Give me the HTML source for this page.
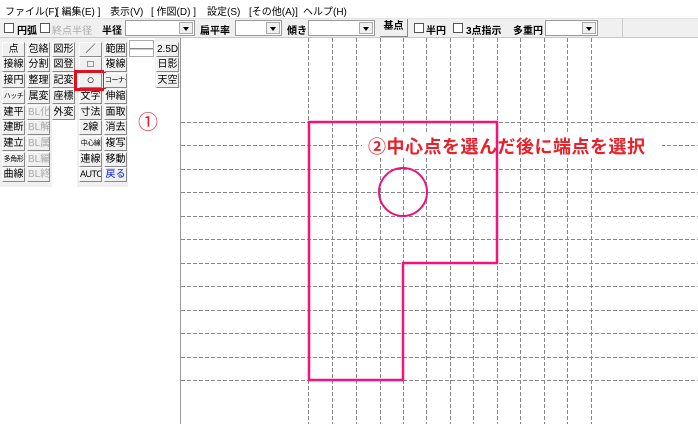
<!DOCTYPE html>
<html><head><meta charset="utf-8"><style>
*{margin:0;padding:0;box-sizing:border-box}
body{width:698px;height:424px;overflow:hidden;background:#fff;position:relative;font-family:"Liberation Sans","Noto Sans CJK JP",sans-serif;font-size:10px;color:#000}
.a{position:absolute;white-space:nowrap}
.menu{top:0;left:0;width:698px;height:18px;background:#fff}
.tb{top:18px;left:0;width:698px;height:20px;background:#f0f0f0;border-top:1px solid #e3e3e3;border-bottom:1px solid #c8c8c8}
.cb{width:10px;height:10px;border:1px solid #555;background:#fff;top:23px}
.combo{top:20px;height:16px;background:#fff;border:1px solid #999}
.combo i{position:absolute;right:1px;top:1px;width:14px;height:12px;border:1px solid #aaa;background:#f0f0f0}
.combo i:after{content:"";position:absolute;left:3px;top:4px;border-left:3px solid transparent;border-right:3px solid transparent;border-top:4px solid #000}
.pan{background:#f0f0f0}
.b{width:23px;height:15px;background:#f0f0f0;border-top:1px solid #fff;border-left:1px solid #fff;border-right:1px solid #888;border-bottom:1px solid #888;font-size:10px;line-height:13px;text-align:center;overflow:hidden}
.s{font-size:7px;letter-spacing:-0.5px}
.g{color:#aaa}
</style></head><body>
<div class="a menu"></div>
<div class="a" style="top:3px;left:5px">ファイル(F)</div>
<div class="a" style="top:3px;left:56px">[ 編集(E) ]</div>
<div class="a" style="top:3px;left:110px">表示(V)</div>
<div class="a" style="top:3px;left:151px">[ 作図(D) ]</div>
<div class="a" style="top:3px;left:207px">設定(S)</div>
<div class="a" style="top:3px;left:249px">[その他(A)]</div>
<div class="a" style="top:3px;left:303px">ヘルプ(H)</div>

<div class="a tb"></div>
<div class="a cb" style="left:4px"></div><div class="a" style="top:22px;left:17px;font-weight:bold">円弧</div>
<div class="a cb" style="left:40px"></div><div class="a g" style="top:22px;left:52px">終点半径</div>
<div class="a" style="top:22px;left:102px;font-weight:bold">半径</div>
<div class="a combo" style="left:125px;width:70px"><i></i></div>
<div class="a" style="top:22px;left:200px;font-weight:bold">扁平率</div>
<div class="a combo" style="left:235px;width:47px"><i></i></div>
<div class="a" style="top:22px;left:287px;font-weight:bold">傾き</div>
<div class="a combo" style="left:308px;width:67px"><i></i></div>
<div class="a" style="top:19px;left:380px;width:28px;height:18px;border-right:1px solid #888;border-bottom:1px solid #888;line-height:16px;text-align:center;font-weight:bold">基点</div>
<div class="a cb" style="left:414px"></div><div class="a" style="top:22px;left:426px;font-weight:bold">半円</div>
<div class="a cb" style="left:453px"></div><div class="a" style="top:22px;left:466px;font-weight:bold">3点指示</div>
<div class="a" style="top:22px;left:513px;font-weight:bold">多重円</div>
<div class="a combo" style="left:545px;width:53px"><i></i></div>
<div class="a" style="top:18px;left:622px;width:1px;height:20px;background:#ccc"></div>

<svg class="a" style="left:0;top:38px" width="698" height="386">
<line x1="180.5" y1="0" x2="180.5" y2="386" stroke="#999" stroke-width="1"/>
<g stroke="#888" stroke-width="1" stroke-dasharray="4,2">
<line x1="308.5" y1="0" x2="308.5" y2="386"/><line x1="332.5" y1="0" x2="332.5" y2="386"/><line x1="356.5" y1="0" x2="356.5" y2="386"/><line x1="380.5" y1="0" x2="380.5" y2="386"/><line x1="403.5" y1="0" x2="403.5" y2="386"/><line x1="426.5" y1="0" x2="426.5" y2="386"/><line x1="450.5" y1="0" x2="450.5" y2="386"/><line x1="473.5" y1="0" x2="473.5" y2="386"/><line x1="497.5" y1="0" x2="497.5" y2="386"/><line x1="520.5" y1="0" x2="520.5" y2="386"/><line x1="544.5" y1="0" x2="544.5" y2="386"/><line x1="567.5" y1="0" x2="567.5" y2="386"/><line x1="591.5" y1="0" x2="591.5" y2="386"/>
<line x1="181" y1="84.5" x2="698" y2="84.5"/><line x1="181" y1="107.5" x2="698" y2="107.5"/><line x1="181" y1="131.5" x2="698" y2="131.5"/><line x1="181" y1="154.5" x2="698" y2="154.5"/><line x1="181" y1="178.5" x2="698" y2="178.5"/><line x1="181" y1="201.5" x2="698" y2="201.5"/><line x1="181" y1="225.5" x2="698" y2="225.5"/><line x1="181" y1="248.5" x2="698" y2="248.5"/><line x1="181" y1="272.5" x2="698" y2="272.5"/><line x1="181" y1="295.5" x2="698" y2="295.5"/><line x1="181" y1="319.5" x2="698" y2="319.5"/><line x1="181" y1="342.5" x2="698" y2="342.5"/>
</g>
<rect x="362" y="96" width="300" height="24" fill="#fff"/>
<path d="M309 84 H497 V225 H403 V342 H309 Z" fill="none" stroke="#f0147c" stroke-width="2.5"/>
<circle cx="403" cy="154" r="24" fill="none" stroke="#e8147c" stroke-width="2"/>
</svg>
<div class="a" style="left:368px;top:134px;font-size:18px;font-weight:bold;color:#e8202a;letter-spacing:0.5px;font-family:'Noto Sans CJK JP',sans-serif;line-height:24px">②中心点を選んだ後に端点を選択</div>
<div class="a" style="left:138px;top:106px;font-size:20px;color:#e8202a;font-family:'Noto Sans CJK JP',sans-serif">①</div>

<div class="a pan" style="left:0;top:38px;width:52px;height:149px"></div>
<div class="a pan" style="left:51px;top:38px;width:26px;height:81px"></div>
<div class="a pan" style="left:77px;top:38px;width:51px;height:149px"></div>
<div class="a pan" style="left:155px;top:38px;width:25px;height:50px"></div>
<div class="a" style="left:129px;top:40px;width:25px;height:17px;border:1px solid #aaa;background:#fff"></div>
<div class="a" style="left:130px;top:48px;width:23px;height:2px;border-top:1px solid #888;border-bottom:1px solid #ccc"></div>

<div class="a b" style="left:2px;top:42px">点</div>
<div class="a b" style="left:2px;top:57px">接線</div>
<div class="a b" style="left:2px;top:73px">接円</div>
<div class="a b s" style="left:2px;top:89px">ハッチ</div>
<div class="a b" style="left:2px;top:105px">建平</div>
<div class="a b" style="left:2px;top:120px">建断</div>
<div class="a b" style="left:2px;top:136px">建立</div>
<div class="a b s" style="left:2px;top:152px">多角形</div>
<div class="a b" style="left:2px;top:167px">曲線</div>

<div class="a b" style="left:27px;top:42px">包絡</div>
<div class="a b" style="left:27px;top:57px">分割</div>
<div class="a b" style="left:27px;top:73px">整理</div>
<div class="a b" style="left:27px;top:89px">属変</div>
<div class="a b g" style="left:27px;top:105px">BL化</div>
<div class="a b g" style="left:27px;top:120px">BL解</div>
<div class="a b g" style="left:27px;top:136px">BL属</div>
<div class="a b g" style="left:27px;top:152px">BL編</div>
<div class="a b g" style="left:27px;top:167px">BL終</div>

<div class="a b" style="left:52px;top:42px">図形</div>
<div class="a b" style="left:52px;top:57px">図登</div>
<div class="a b" style="left:52px;top:73px">記変</div>
<div class="a b" style="left:52px;top:89px">座標</div>
<div class="a b" style="left:52px;top:105px">外変</div>

<div class="a b" style="left:79px;top:42px">／</div>
<div class="a b" style="left:79px;top:57px">□</div>
<div class="a b" style="left:79px;top:73px;font-size:13px;line-height:12px">○</div>
<div class="a b" style="left:79px;top:89px">文字</div>
<div class="a b" style="left:79px;top:105px">寸法</div>
<div class="a b" style="left:79px;top:120px">2線</div>
<div class="a b s" style="left:79px;top:136px">中心線</div>
<div class="a b" style="left:79px;top:152px">連線</div>
<div class="a b" style="left:79px;top:167px;font-size:9px;letter-spacing:-0.5px">AUTO</div>
<div class="a" style="left:74px;top:70px;width:32px;height:21px;border:3px solid #e01020"></div>

<div class="a b" style="left:104px;top:42px">範囲</div>
<div class="a b" style="left:104px;top:57px">複線</div>
<div class="a b s" style="left:104px;top:73px">コーナー</div>
<div class="a b" style="left:104px;top:89px">伸縮</div>
<div class="a b" style="left:104px;top:105px">面取</div>
<div class="a b" style="left:104px;top:120px">消去</div>
<div class="a b" style="left:104px;top:136px">複写</div>
<div class="a b" style="left:104px;top:152px">移動</div>
<div class="a b" style="left:104px;top:167px;color:#1020e0">戻る</div>

<div class="a b" style="left:156px;top:42px">2.5D</div>
<div class="a b" style="left:156px;top:57px">日影</div>
<div class="a b" style="left:156px;top:73px">天空</div>
</body></html>
